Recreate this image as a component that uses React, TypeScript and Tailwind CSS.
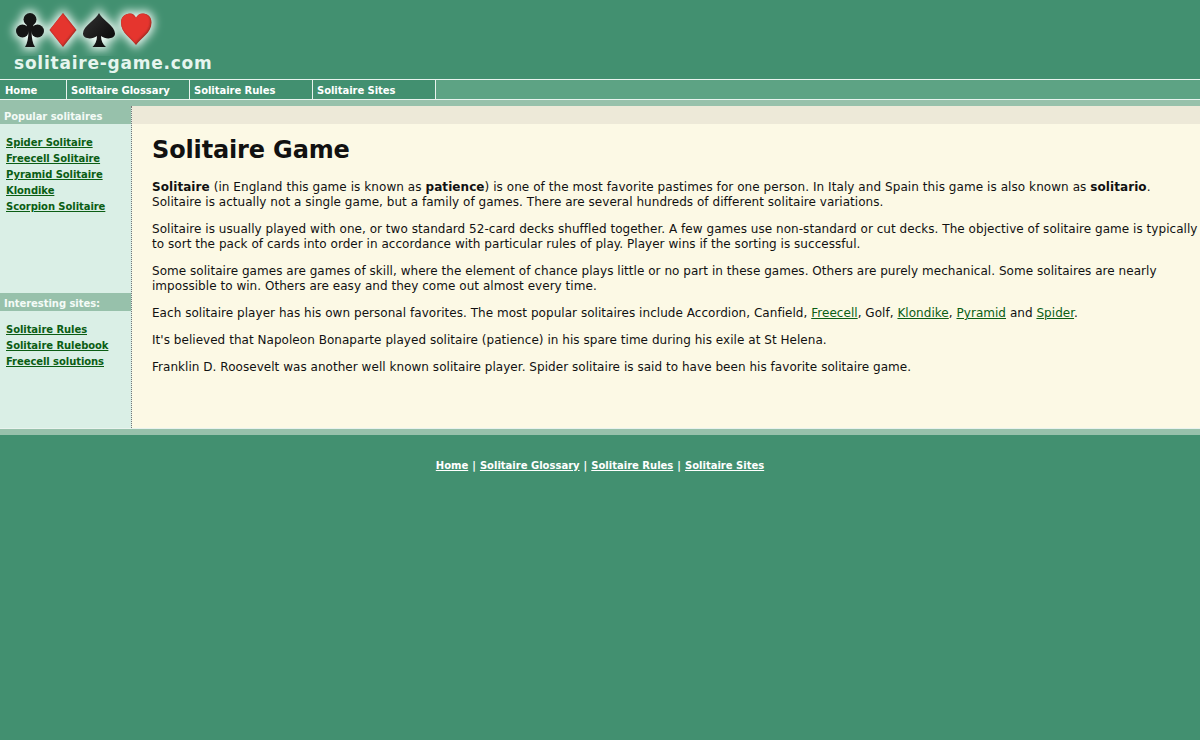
const navItems = [
  { label: 'Home', width: 'w-[67px]', pad: 'pl-[5px]' },
  { label: 'Solitaire Glossary', width: 'w-[123px]', pad: 'pl-1' },
  { label: 'Solitaire Rules', width: 'w-[123px]', pad: 'pl-1' },
  { label: 'Solitaire Sites', width: 'w-[123px]', pad: 'pl-1' },
];

const popular = ['Spider Solitaire', 'Freecell Solitaire', 'Pyramid Solitaire', 'Klondike', 'Scorpion Solitaire'];
const sites = ['Solitaire Rules', 'Solitaire Rulebook', 'Freecell solutions'];
const footerLinks = ['Home', 'Solitaire Glossary', 'Solitaire Rules', 'Solitaire Sites'];

const diamond = 'M63 13 L76.5 30 L63 47 L49.5 30 Z';
const spade = 'M99 13 C102 20 115 26 115 33.5 C115 39 106 40 101 36 C101 41 103 44.5 106 47 H92.5 C95 44.5 97 41 97 36 C92 40 83 39 83 33.5 C83 26 96 20 99 13 Z';
const heart = 'M136 45 C131 38 121 33 121 22.5 C121 17 125 13.5 130 13.5 C133 13.5 135 15.5 136 18 C137 15.5 139.5 13.5 143 13.5 C148 13.5 151.5 17 151.5 22.5 C151.5 33 141 38 136 45 Z';

function Club() {
  return (
    <>
      <circle cx="30" cy="19.5" r="6.5" />
      <circle cx="22.5" cy="31" r="6.5" />
      <circle cx="37.5" cy="31" r="6.5" />
      <path d="M27 22 H33 L34 31 H31.5 C31.7 38 32.5 43.5 35 47 H25 C27.5 43.5 28.3 38 28.5 31 H26 Z" />
    </>
  );
}

function Logo() {
  return (
    <svg width="165" height="56" viewBox="0 0 165 56" className="block">
      <defs>
        <filter id="glow" x="-50%" y="-50%" width="200%" height="200%">
          <feGaussianBlur stdDeviation="5" />
        </filter>
        <filter id="soft" x="-20%" y="-20%" width="140%" height="140%">
          <feGaussianBlur stdDeviation="1.2" />
        </filter>
        <clipPath id="diamondClip">
          <path d={diamond} />
        </clipPath>
        <clipPath id="heartClip">
          <path d={heart} />
        </clipPath>
        <linearGradient id="black" x1="0" y1="0" x2="1" y2="1">
          <stop offset="0" stopColor="#333333" />
          <stop offset="1" stopColor="#050505" />
        </linearGradient>
      </defs>
      <g filter="url(#glow)" fill="#f6fffb" stroke="#f6fffb" strokeWidth="5">
        <Club />
        <path d={diamond} />
        <path d={spade} />
        <path d={heart} />
      </g>
      <g fill="#151515">
        <Club />
      </g>
      <path d={spade} fill="url(#black)" />
      <path d={diamond} fill="#9c2a20" />
      <g clipPath="url(#diamondClip)">
        <path d={diamond} fill="#e5352e" filter="url(#soft)" transform="translate(-0.8 -0.8)" />
      </g>
      <path d={heart} fill="#9c2a20" />
      <g clipPath="url(#heartClip)">
        <path d={heart} fill="#e5352e" filter="url(#soft)" transform="translate(-1 -1)" />
      </g>
    </svg>
  );
}

function SideHeading({ children }: { children: string }) {
  return (
    <div className="h-[18px] bg-[#97c1ab] pt-0.5 pl-1 text-[10px] leading-[18px] font-bold tracking-[-0.05px] text-[#f4fbf7]">{children}</div>
  );
}

function SideLinks({ items }: { items: string[] }) {
  return (
    <ul className="pl-1.5">
      {items.map((item) => (
        <li key={item} className="h-4 text-[10px] leading-4 font-bold tracking-[-0.07px]">
          <a href="#" className="text-[#0b5d14] underline">{item}</a>
        </li>
      ))}
    </ul>
  );
}

export default function App() {
  return (
    <div className="min-h-[740px] bg-[#429070] font-['DejaVu_Sans',Verdana,sans-serif] text-[12px] leading-[15px] tracking-[0.04px] text-[#111]">
      <header className="h-[79px] overflow-hidden">
        <Logo />
        <div className="-mt-[3px] pl-[14px] text-[17px] leading-5 font-bold tracking-[0.77px] whitespace-nowrap text-[#e6f5ee]">
          solitaire-game.com
        </div>
      </header>

      <nav className="flex h-[21px] border-y border-[#e8f3ee] bg-[#5da384]">
        {navItems.map((item) => (
          <a
            key={item.label}
            href="#"
            className={`${item.width} ${item.pad} border-r border-[#e8f3ee] bg-[#429070] pt-px text-[10px] leading-[19px] font-bold tracking-[-0.05px] text-white`}
          >
            {item.label}
          </a>
        ))}
      </nav>
      <div className="h-[6px] bg-[#97c1ab]" />

      <div className="flex h-[322px]">
        <aside className="flex w-[132px] shrink-0 flex-col border-r border-dotted border-[#777] bg-[#daefe6]">
          <SideHeading>Popular solitaires</SideHeading>
          <div className="h-[169px] pt-[11px]">
            <SideLinks items={popular} />
          </div>
          <SideHeading>Interesting sites:</SideHeading>
          <div className="pt-[11px]">
            <SideLinks items={sites} />
          </div>
        </aside>

        <main className="flex-1 overflow-hidden bg-[#fcf9e5]">
          <div className="h-[18px] bg-[#ede9d8]" />
          <div className="pl-5">
            <h1 className="mt-[9px] text-[24px] leading-[34px] font-bold tracking-[-0.15px] text-[#111]">Solitaire Game</h1>
            <p className="mt-[13px] whitespace-nowrap">
              <span className="tracking-[0.07px]"><b>Solitaire</b> (in England this game is known as <b>patience</b>) is one of the most favorite pastimes for one person. In Italy and Spain this game is also known as <b>solitario</b>.</span>
              <br />
              Solitaire is actually not a single game, but a family of games. There are several hundreds of different solitaire variations.
            </p>
            <p className="mt-3 whitespace-nowrap">
              Solitaire is usually played with one, or two standard 52-card decks shuffled together. A few games use non-standard or cut decks. The objective of solitaire game is typically
              <br />
              to sort the pack of cards into order in accordance with particular rules of play. Player wins if the sorting is successful.
            </p>
            <p className="mt-3 whitespace-nowrap">
              Some solitaire games are games of skill, where the element of chance plays little or no part in these games. Others are purely mechanical. Some solitaires are nearly
              <br />
              impossible to win. Others are easy and they come out almost every time.
            </p>
            <p className="mt-3 whitespace-nowrap">
              Each solitaire player has his own personal favorites. The most popular solitaires include Accordion, Canfield, <a href="#" className="text-[#0b5d14] underline">Freecell</a>, Golf, <a href="#" className="text-[#0b5d14] underline">Klondike</a>, <a href="#" className="text-[#0b5d14] underline">Pyramid</a> and <a href="#" className="text-[#0b5d14] underline">Spider</a>.
            </p>
            <p className="mt-3 whitespace-nowrap">
              It's believed that Napoleon Bonaparte played solitaire (patience) in his spare time during his exile at St Helena.
            </p>
            <p className="mt-3 whitespace-nowrap">
              Franklin D. Roosevelt was another well known solitaire player. Spider solitaire is said to have been his favorite solitaire game.
            </p>
          </div>
        </main>
      </div>

      <div className="h-[7px] border-t border-[#e8f3ee] bg-[#97c1ab]" />

      <footer className="flex justify-center gap-1 pt-[25px] text-[10px] leading-3 font-bold tracking-normal text-white">
        {footerLinks.map((link, i) => (
          <span key={link} className="flex gap-1">
            {i > 0 && <span>|</span>}
            <a href="#" className="underline">{link}</a>
          </span>
        ))}
      </footer>
    </div>
  );
}
